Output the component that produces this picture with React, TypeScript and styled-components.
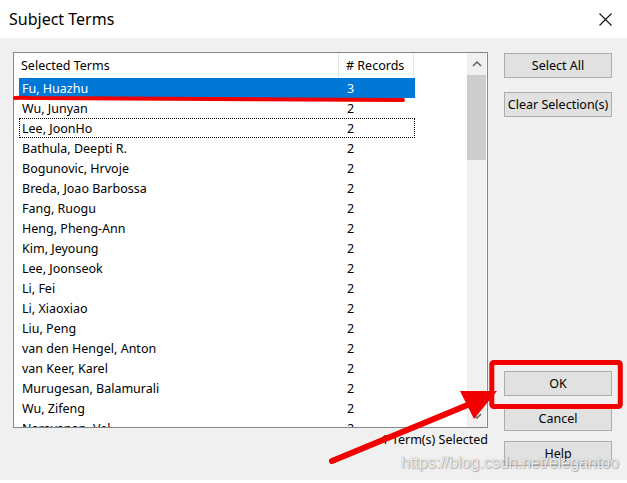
import React from "react";
import styled, { createGlobalStyle } from "styled-components";

const terms: [string, number][] = [
  ["Fu, Huazhu", 3],
  ["Wu, Junyan", 2],
  ["Lee, JoonHo", 2],
  ["Bathula, Deepti R.", 2],
  ["Bogunovic, Hrvoje", 2],
  ["Breda, Joao Barbossa", 2],
  ["Fang, Ruogu", 2],
  ["Heng, Pheng-Ann", 2],
  ["Kim, Jeyoung", 2],
  ["Lee, Joonseok", 2],
  ["Li, Fei", 2],
  ["Li, Xiaoxiao", 2],
  ["Liu, Peng", 2],
  ["van den Hengel, Anton", 2],
  ["van Keer, Karel", 2],
  ["Murugesan, Balamurali", 2],
  ["Wu, Zifeng", 2],
  ["Narayanan, Vel", 2],
];

const Chevron = ({ up }: { up?: boolean }) => (
  <svg width="10" height="6" viewBox="0 0 10 6">
    <path
      d={up ? "M1 5 L5 1 L9 5" : "M1 1 L5 5 L9 1"}
      fill="none"
      stroke="#606060"
      strokeWidth="1.5"
    />
  </svg>
);

const App = () => {
  return (
    <>
      <GlobalStyle />
      <Dialog>
        <TitleBar>
          <Title>Subject Terms</Title>
          <CloseButton>
            <svg width="13" height="13" viewBox="0 0 13 13">
              <path d="M0.5 0.5 L12.5 12.5 M12.5 0.5 L0.5 12.5" stroke="#111" strokeWidth="1.1" />
            </svg>
          </CloseButton>
        </TitleBar>
        <Body>
          <LeftColumn>
            <ListBox>
              <ListContent>
                <Header>
                  <HeaderCell $width={325}>Selected Terms</HeaderCell>
                  <HeaderCell $width={75}># Records</HeaderCell>
                </Header>
                {terms.map(([name, count], i) => (
                  <Row key={name} $selected={i === 0} $focused={i === 2}>
                    <NameCell>{name}</NameCell>
                    <CountCell>{count}</CountCell>
                  </Row>
                ))}
              </ListContent>
              <ScrollBar>
                <ScrollArrow>
                  <Chevron up />
                </ScrollArrow>
                <Thumb />
                <ScrollTrack />
                <ScrollArrow>
                  <Chevron />
                </ScrollArrow>
              </ScrollBar>
            </ListBox>
            <Status>1 Term(s) Selected</Status>
          </LeftColumn>
          <ButtonColumn>
            <ButtonGroup $gap={14}>
              <Button>Select All</Button>
              <Button>Clear Selection(s)</Button>
            </ButtonGroup>
            <ButtonGroup $gap={10}>
              <Button>OK</Button>
              <Button>Cancel</Button>
              <Button>Help</Button>
            </ButtonGroup>
          </ButtonColumn>
        </Body>
        <Annotations width="627" height="483" viewBox="0 0 627 483">
          <path
            d="M15 98 Q18 97.5 30 98 L403 100"
            fill="none"
            stroke="#f20000"
            strokeWidth="4"
            strokeLinecap="round"
          />
          <rect
            x="491.8"
            y="362.5"
            width="128.5"
            height="44"
            rx="2"
            fill="none"
            stroke="#f20000"
            strokeWidth="5"
          />
          <path d="M332 461 L470 404" stroke="#f20000" strokeWidth="6" strokeLinecap="round" />
          <polygon points="460,391 497,391 474,419" fill="#f20000" />
        </Annotations>
        <Watermark>https://blog.csdn.net/elegantoo</Watermark>
      </Dialog>
    </>
  );
};

const GlobalStyle = createGlobalStyle`
  html, body {
    margin: 0;
    background: #ffffff;
  }
  body {
    font-family: "Noto Sans", "Open Sans", sans-serif;
  }
`;

const Dialog = styled.div`
  background: #f0f0f0;
  display: flex;
  flex-direction: column;
  height: 480px;
  position: relative;
  width: 627px;
`;

const TitleBar = styled.div`
  align-items: center;
  background: #ffffff;
  display: flex;
  flex-shrink: 0;
  height: 38px;
  justify-content: space-between;
  padding: 0 15px 0 9px;
  box-sizing: border-box;
`;

const Title = styled.div`
  color: #000;
  font-size: 16px;
`;

const CloseButton = styled.div`
  display: flex;
  margin-top: 1px;
`;

const Body = styled.div`
  box-sizing: border-box;
  display: flex;
  flex: 1;
  gap: 16px;
  padding: 14px 15px 14px 13px;
`;

const LeftColumn = styled.div`
  display: flex;
  flex-direction: column;
  width: 475px;
`;

const ListBox = styled.div`
  background: #ffffff;
  border: 1px solid #828790;
  display: flex;
  height: 376px;
  box-sizing: border-box;
  overflow: hidden;
`;

const ListContent = styled.div`
  flex: 1;
  overflow: hidden;
`;

const Header = styled.div`
  display: flex;
  height: 25px;
`;

const HeaderCell = styled.div<{ $width: number }>`
  align-items: center;
  border-right: 1px solid #e5e5e5;
  box-sizing: border-box;
  color: #000;
  display: flex;
  font-size: 12.5px;
  padding-left: 7px;
  width: ${(p) => p.$width}px;
`;

const Row = styled.div<{ $selected?: boolean; $focused?: boolean }>`
  align-items: center;
  background: ${(p) => (p.$selected ? "#0078d7" : "transparent")};
  border: 1px ${(p) => (p.$focused ? "dotted #000" : "solid transparent")};
  box-sizing: border-box;
  color: ${(p) => (p.$selected ? "#ffffff" : "#000")};
  display: flex;
  font-size: 12.5px;
  height: 20px;
  margin-left: 5px;
  width: 396px;
`;

const NameCell = styled.div`
  padding-left: 2px;
  width: 319px;
`;

const CountCell = styled.div`
  padding-left: 6px;
`;

const ScrollBar = styled.div`
  background: #f0f0f0;
  display: flex;
  flex-direction: column;
  margin-right: 1px;
  width: 19px;
`;

const ScrollArrow = styled.div`
  align-items: center;
  display: flex;
  height: 22px;
  justify-content: center;
`;

const Thumb = styled.div`
  background: #cdcdcd;
  height: 85px;
`;

const ScrollTrack = styled.div`
  flex: 1;
`;

const Status = styled.div`
  color: #000;
  font-size: 12.5px;
  line-height: 16px;
  margin-top: 4px;
  text-align: right;
`;

const ButtonColumn = styled.div`
  display: flex;
  flex-direction: column;
  justify-content: space-between;
  padding-top: 1px;
  width: 108px;
`;

const ButtonGroup = styled.div<{ $gap: number }>`
  display: flex;
  flex-direction: column;
  gap: ${(p) => p.$gap}px;
`;

const Button = styled.div`
  align-items: center;
  background: #e1e1e1;
  border: 1px solid #adadad;
  box-sizing: border-box;
  color: #000;
  display: flex;
  font-size: 12.5px;
  height: 25px;
  justify-content: center;
`;

const Annotations = styled.svg`
  left: 0;
  pointer-events: none;
  position: absolute;
  top: 0;
`;

const Watermark = styled.div`
  color: rgba(255, 255, 255, 0.85);
  font-family: "Liberation Sans", Arial, sans-serif;
  font-size: 16px;
  left: 401px;
  position: absolute;
  text-shadow: 0 0 1px rgba(0, 0, 0, 0.35), 1px 1px 1px rgba(0, 0, 0, 0.25);
  top: 454px;
`;

export default App;
